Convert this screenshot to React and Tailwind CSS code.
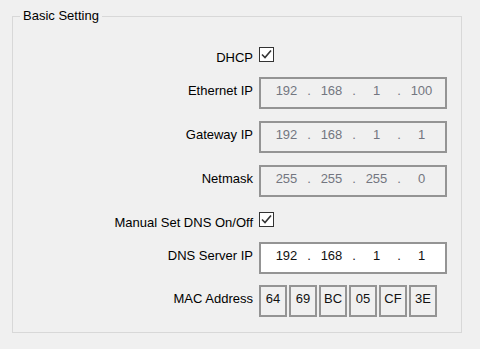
import React from 'react';

const font = { fontFamily: '"Liberation Sans", Arial, sans-serif' };

const Label = ({ children, check }) => (
  <div className={`w-[240px] text-right leading-[15px] ${check ? 'mt-[6px]' : 'mb-[5px]'}`}>
    {children}
  </div>
);

const Check = () => (
  <div className="ml-[6px] w-[15px] h-[15px] border border-[#333] bg-white flex items-center justify-center">
    <svg width="13" height="13" viewBox="0 0 13 13">
      <polyline points="2,6.5 5,9.5 11,2.5" fill="none" stroke="#333" strokeWidth="1.6" />
    </svg>
  </div>
);

const IpBox = ({ values, enabled }) => (
  <div
    className={`ml-[6px] flex items-center h-[32px] w-[188px] border-2 border-[#949494] pl-[8px] ${
      enabled ? 'bg-white text-[#111]' : 'bg-[#f0f0f0] text-[#737680]'
    }`}
  >
    {values.map((v, i) => (
      <React.Fragment key={i}>
        {i > 0 && <span className="w-[10px] text-center mb-[5px] leading-[15px]">.</span>}
        <span className="w-[35px] text-center mb-[5px] leading-[15px]">{v}</span>
      </React.Fragment>
    ))}
  </div>
);

const Row = ({ children, className = '' }) => (
  <div className={`flex items-center ${className}`}>{children}</div>
);

export default function App() {
  const mac = ['64', '69', 'BC', '05', 'CF', '3E'];

  return (
    <div className="w-[480px] h-[349px] bg-[#f0f0f0] text-[13px] text-black pt-[16px] pl-[12px]" style={font}>
      <div className="relative w-[450px] h-[317px] border border-[#d8d8d8] pt-[30px]">
        <div className="absolute left-[7px] top-[-9px] px-[3px] bg-[#f0f0f0] leading-[16px]">Basic Setting</div>

        <Row className="h-[15px]">
          <Label check>DHCP</Label>
          <Check />
        </Row>

        <Row className="mt-[15px]">
          <Label>Ethernet IP</Label>
          <IpBox values={['192', '168', '1', '100']} />
        </Row>

        <Row className="mt-[12px]">
          <Label>Gateway IP</Label>
          <IpBox values={['192', '168', '1', '1']} />
        </Row>

        <Row className="mt-[12px]">
          <Label>Netmask</Label>
          <IpBox values={['255', '255', '255', '0']} />
        </Row>

        <Row className="mt-[15px] h-[15px]">
          <Label check>Manual Set DNS On/Off</Label>
          <Check />
        </Row>

        <Row className="mt-[15px]">
          <Label>DNS Server IP</Label>
          <IpBox values={['192', '168', '1', '1']} enabled />
        </Row>

        <Row className="mt-[11px]">
          <Label>MAC Address</Label>
          <div className="ml-[6px] flex gap-[2px]">
            {mac.map((m) => (
              <div
                key={m}
                className="w-[28px] h-[32px] border-2 border-[#949494] bg-[#f0f0f0] flex items-center justify-center text-[#111]"
              >
                <span className="mb-[5px] leading-[15px]">{m}</span>
              </div>
            ))}
          </div>
        </Row>
      </div>
    </div>
  );
}
